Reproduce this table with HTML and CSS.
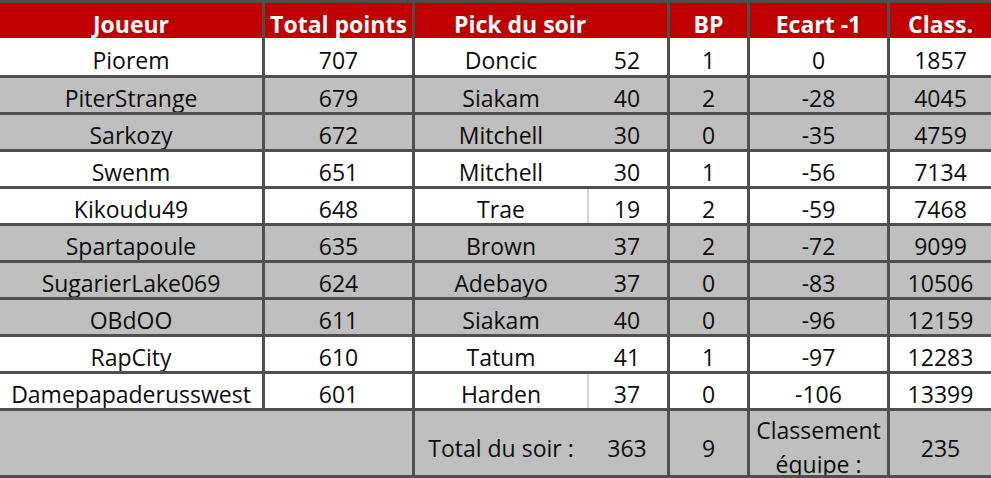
FILE: index.html
```html
<!DOCTYPE html>
<html lang="fr">
<head>
<meta charset="utf-8">
<title>Classement</title>
<link rel="stylesheet" href="styles.css">
</head>
<body>
<div class="sheet">
  <div class="row head">
    <div class="c">Joueur</div>
    <div class="c">Total points</div>
    <div class="c pick-h">Pick du soir</div>
    <div class="c">BP</div>
    <div class="c">Ecart -1</div>
    <div class="c last">Class.</div>
  </div>
  <div class="row white">
    <div class="c">Piorem</div><div class="c">707</div><div class="c name">Doncic</div><div class="c">52</div><div class="c">1</div><div class="c">0</div><div class="c last">1857</div>
  </div>
  <div class="row gray">
    <div class="c">PiterStrange</div><div class="c">679</div><div class="c name">Siakam</div><div class="c">40</div><div class="c">2</div><div class="c">-28</div><div class="c last">4045</div>
  </div>
  <div class="row gray">
    <div class="c">Sarkozy</div><div class="c">672</div><div class="c name">Mitchell</div><div class="c">30</div><div class="c">0</div><div class="c">-35</div><div class="c last">4759</div>
  </div>
  <div class="row white">
    <div class="c">Swenm</div><div class="c">651</div><div class="c name">Mitchell</div><div class="c">30</div><div class="c">1</div><div class="c">-56</div><div class="c last">7134</div>
  </div>
  <div class="row white">
    <div class="c">Kikoudu49</div><div class="c">648</div><div class="c name">Trae</div><div class="c sep">19</div><div class="c">2</div><div class="c">-59</div><div class="c last">7468</div>
  </div>
  <div class="row gray">
    <div class="c">Spartapoule</div><div class="c">635</div><div class="c name">Brown</div><div class="c">37</div><div class="c">2</div><div class="c">-72</div><div class="c last">9099</div>
  </div>
  <div class="row gray">
    <div class="c">SugarierLake069</div><div class="c">624</div><div class="c name">Adebayo</div><div class="c">37</div><div class="c">0</div><div class="c">-83</div><div class="c last">10506</div>
  </div>
  <div class="row gray">
    <div class="c">OBdOO</div><div class="c">611</div><div class="c name">Siakam</div><div class="c">40</div><div class="c">0</div><div class="c">-96</div><div class="c last">12159</div>
  </div>
  <div class="row white">
    <div class="c">RapCity</div><div class="c">610</div><div class="c name">Tatum</div><div class="c">41</div><div class="c">1</div><div class="c">-97</div><div class="c last">12283</div>
  </div>
  <div class="row white">
    <div class="c">Damepapaderusswest</div><div class="c">601</div><div class="c name">Harden</div><div class="c sep">37</div><div class="c">0</div><div class="c">-106</div><div class="c last">13399</div>
  </div>
  <div class="row gray foot">
    <div class="c span2"></div>
    <div class="c name">Total du soir :</div>
    <div class="c">363</div>
    <div class="c">9</div>
    <div class="c wrap">Classement équipe :</div>
    <div class="c last">235</div>
  </div>
</div>
</body>
</html>
```

FILE: styles.css
```css
html, body {
  margin: 0;
  padding: 0;
  background: #ffffff;
}

.sheet {
  box-sizing: border-box;
  width: 991px;
  height: 478px;
  border-top: 3px solid #4f4f4f;
  display: grid;
  grid-template-columns: 265px 150px 172px 83px 80px 140px 101px;
  grid-template-rows: 35px 40px repeat(9, 37px) 67px;
  font-family: "Open Sans", "Liberation Sans", sans-serif;
  font-size: 23px;
  color: #0d0d0d;
}

.row {
  display: contents;
}

.c {
  box-sizing: border-box;
  display: flex;
  align-items: center;
  justify-content: center;
  padding-top: 6px;
  border-right: 3px solid #4f4f4f;
  border-bottom: 3px solid #4f4f4f;
  white-space: nowrap;
  overflow: hidden;
}

.c.last {
  border-right: none;
}

.c.name {
  border-right: none;
}

.c.sep {
  box-shadow: inset 2px 0 0 #d4d4d4;
}

.head .c {
  background: #c00000;
  color: #ffffff;
  font-weight: 700;
  border-bottom: none;
}

.head .pick-h {
  grid-column: span 2;
  justify-content: flex-start;
  padding-left: 39px;
}

.white .c {
  background: #ffffff;
}

.gray .c {
  background: #bfbfbf;
}

.foot .c {
  padding-top: 10px;
}

.foot .span2 {
  grid-column: span 2;
}

.foot .wrap {
  white-space: normal;
  text-align: center;
  line-height: 34px;
  padding-top: 8px;
}
```
